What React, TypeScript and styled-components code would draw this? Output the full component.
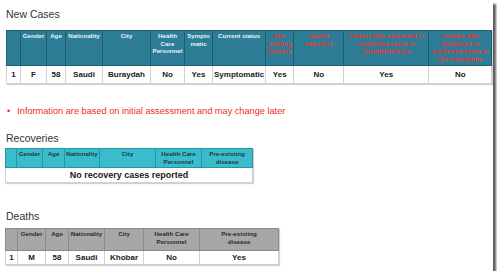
import * as React from 'react'
import styled, { createGlobalStyle } from 'styled-components'

const GlobalStyle = createGlobalStyle`
  html, body {
    margin: 0;
    padding: 0;
    background: #ffffff;
  }
  body {
    font-family: 'Liberation Sans', Arial, sans-serif;
  }
`

const Page = styled.div`
  width: 493px;
  height: 271px;
  background: #ffffff;
  box-shadow: 3px 4px 2px rgba(40, 40, 40, 0.75);
  overflow: hidden;
  box-sizing: border-box;
  padding: 8px 0 0 5px;
`

const Title = styled.div<{ gap?: number }>`
  font-size: 10.5px;
  line-height: 13px;
  color: #333333;
  margin-top: ${p => p.gap || 0}px;
  padding-left: 1px;
`

const Note = styled.div`
  display: flex;
  align-items: center;
  gap: 7px;
  margin-top: 22px;
  padding-left: 2px;
  font-size: 9.2px;
  line-height: 11px;
  color: #f02a2a;
`

type Tone = 'dark' | 'light' | 'gray'

const headBg: Record<Tone, string> = {
  dark: '#2e7d96',
  light: '#39bccb',
  gray: '#a7a7a7',
}

const headLine: Record<Tone, string> = {
  dark: '#1f5d72',
  light: '#2a94a3',
  gray: '#8a8a8a',
}

const headText: Record<Tone, string> = {
  dark: '#e8f3f6',
  light: '#1d3c44',
  gray: '#2b2b2b',
}

const Table = styled.table<{ gap?: number }>`
  border-collapse: collapse;
  table-layout: fixed;
  margin-top: ${p => p.gap || 0}px;
  box-shadow: 1px 1px 1px rgba(0, 0, 0, 0.18);
`

const Head = styled.th<{ tone: Tone; w: number; h: number; red?: boolean }>`
  width: ${p => p.w}px;
  height: ${p => p.h}px;
  box-sizing: border-box;
  padding: 1px 1px 0;
  vertical-align: top;
  text-align: center;
  background: ${p => headBg[p.tone]};
  border: 1px solid ${p => headLine[p.tone]};
  color: ${p => (p.red ? '#ff2b2b' : headText[p.tone])};
  font-size: 6.2px;
  line-height: 7.6px;
  font-weight: 700;
`

const Cell = styled.td<{ h: number }>`
  height: ${p => p.h}px;
  box-sizing: border-box;
  padding: 0 1px;
  text-align: center;
  vertical-align: middle;
  border: 1px solid #d2d2d2;
  color: #1a1a1a;
  font-size: 8px;
  font-weight: 700;
  background: #ffffff;
`

const Wide = styled(Cell)`
  font-size: 9px;
`

type Col = { label: React.ReactNode; w: number; red?: boolean }

const newCols: Col[] = [
  { label: '', w: 14 },
  { label: 'Gender', w: 26 },
  { label: 'Age', w: 19 },
  { label: 'Nationality', w: 37 },
  { label: 'City', w: 48 },
  { label: <>Health<br />Care<br />Personnel</>, w: 34 },
  { label: <>Sympto<br />matic</>, w: 28 },
  { label: 'Current status', w: 52 },
  { label: <>Pre-<br />existing<br />disease</>, w: 28, red: true },
  { label: <>animal<br />exposure</>, w: 50, red: true },
  { label: <>contact with suspected or<br />confirmed cases in<br />hospitals/clinics</>, w: 85, red: true },
  { label: <>contact with<br />suspected or<br />confirmed cases in<br />the community</>, w: 63, red: true },
]

const newRow = ['1', 'F', '58', 'Saudi', 'Buraydah', 'No', 'Yes', 'Symptomatic', 'Yes', 'No', 'Yes', 'No']

const recCols: Col[] = [
  { label: '', w: 11 },
  { label: 'Gender', w: 26 },
  { label: 'Age', w: 22 },
  { label: 'Nationality', w: 35 },
  { label: 'City', w: 56 },
  { label: <>Health Care<br />Personnel</>, w: 46 },
  { label: <>Pre-existing<br />disease</>, w: 51 },
]

const deathCols: Col[] = [
  { label: '', w: 12 },
  { label: 'Gender', w: 28 },
  { label: 'Age', w: 23 },
  { label: 'Nationality', w: 36 },
  { label: 'City', w: 39 },
  { label: <>Health Care<br />Personnel</>, w: 56 },
  { label: <>Pre-existing<br />disease</>, w: 79 },
]

const deathRow = ['1', 'M', '58', 'Saudi', 'Khobar', 'No', 'Yes']

const HeadRow = ({ cols, tone, h }: { cols: Col[]; tone: Tone; h: number }) => (
  <tr>
    {cols.map((c, i) => (
      <Head key={i} tone={tone} w={c.w} h={h} red={c.red}>
        {c.label}
      </Head>
    ))}
  </tr>
)

export default function App() {
  return (
    <>
      <GlobalStyle />
      <Page>
        <Title>New Cases</Title>
        <Table gap={9} style={{ marginLeft: 1 }}>
          <thead>
            <HeadRow cols={newCols} tone="dark" h={35} />
          </thead>
          <tbody>
            <tr>
              {newRow.map((v, i) => (
                <Cell key={i} h={18}>{v}</Cell>
              ))}
            </tr>
          </tbody>
        </Table>

        <Note>
          <span>•</span>
          <span>Information are based on initial assessment and may change later</span>
        </Note>

        <Title gap={15}>Recoveries</Title>
        <Table gap={3}>
          <thead>
            <HeadRow cols={recCols} tone="light" h={19} />
          </thead>
          <tbody>
            <tr>
              <Wide h={15} colSpan={recCols.length}>No recovery cases reported</Wide>
            </tr>
          </tbody>
        </Table>

        <Title gap={27}>Deaths</Title>
        <Table gap={5}>
          <thead>
            <HeadRow cols={deathCols} tone="gray" h={22} />
          </thead>
          <tbody>
            <tr>
              {deathRow.map((v, i) => (
                <Cell key={i} h={14}>{v}</Cell>
              ))}
            </tr>
          </tbody>
        </Table>
      </Page>
    </>
  )
}
